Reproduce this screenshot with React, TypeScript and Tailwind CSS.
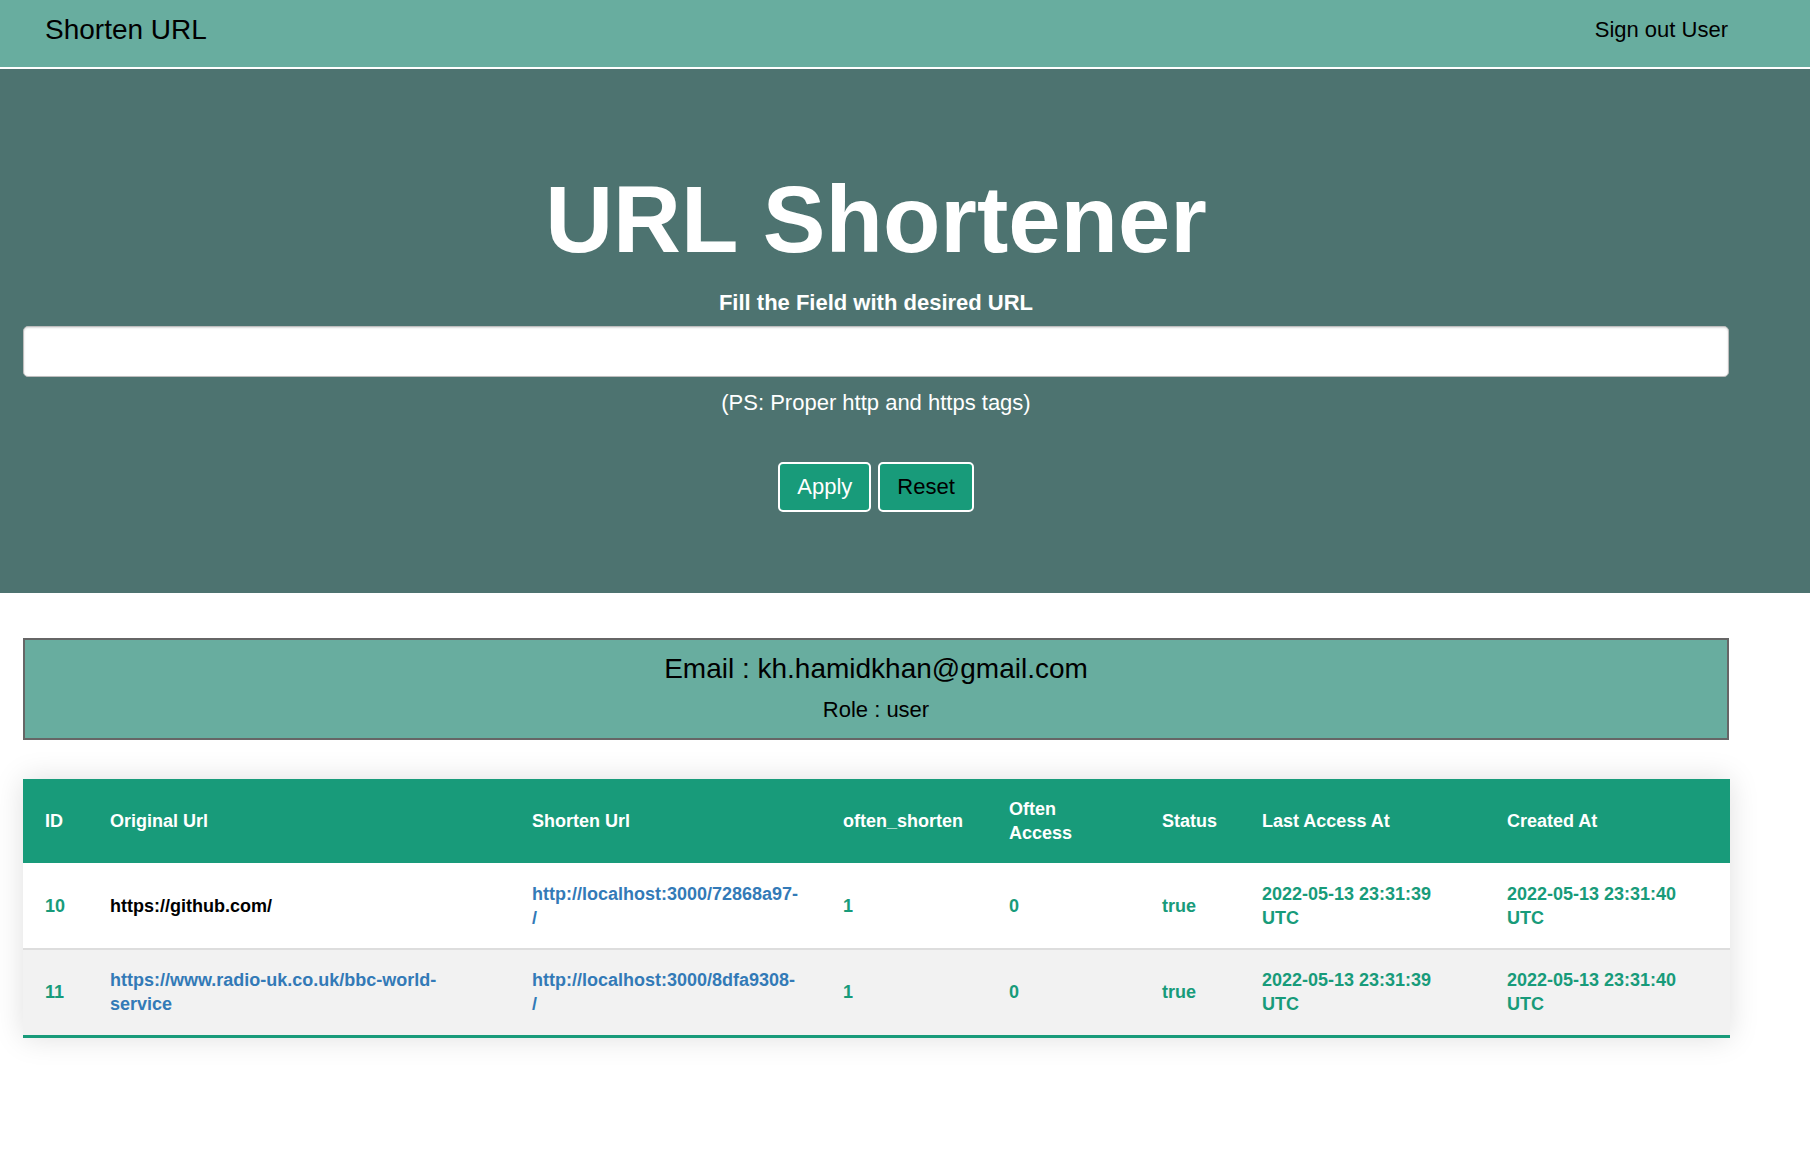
const rows = [
  {
    id: 10,
    original: 'https://github.com/',
    originalIsLink: false,
    short: 'http://localhost:3000/72868a97-/',
    oftenShorten: 1,
    oftenAccess: 0,
    status: 'true',
    lastAccess: '2022-05-13 23:31:39 UTC',
    created: '2022-05-13 23:31:40 UTC',
  },
  {
    id: 11,
    original: 'https://www.radio-uk.co.uk/bbc-world-service',
    originalIsLink: true,
    short: 'http://localhost:3000/8dfa9308-/',
    oftenShorten: 1,
    oftenAccess: 0,
    status: 'true',
    lastAccess: '2022-05-13 23:31:39 UTC',
    created: '2022-05-13 23:31:40 UTC',
  },
];

const headers = ['ID', 'Original Url', 'Shorten Url', 'often_shorten', 'Often Access', 'Status', 'Last Access At', 'Created At'];

const App = () => {
  return (
    <div className="min-h-screen bg-white font-['Liberation_Sans',Arial,sans-serif]">
      {/* Navbar */}
      <nav className="h-[69px] bg-[#68ad9f] border-b-2 border-white flex items-center justify-between pl-[45px] pr-[82px] pb-[7px]">
        <span className="text-[28px] leading-none text-black">Shorten URL</span>
        <a href="#" className="text-[22px] leading-none text-black">Sign out User</a>
      </nav>

      {/* Hero */}
      <section className="bg-[#4d7370] pt-[104px] pb-[81px]">
        <div className="ml-[23px] w-[1706px] flex flex-col items-center">
          <h1 className="text-[94px] leading-none font-bold text-white">URL Shortener</h1>
          <label className="mt-[25px] text-[22px] leading-none font-bold text-white">
            Fill the Field with desired URL
          </label>
          <input
            type="text"
            className="mt-[12px] w-full h-[51px] bg-white border border-[#bdbdbd] rounded-[5px] shadow-[inset_0_1px_2px_rgba(0,0,0,0.15)] px-3 text-[20px] outline-none"
          />
          <p className="mt-[15px] text-[22px] leading-none text-white">(PS: Proper http and https tags)</p>
          <div className="mt-[48px] flex gap-[7px]">
            <button className="h-[50px] px-[17px] bg-[#189b7a] border-2 border-white rounded-[5px] text-[22px] leading-none text-white">
              Apply
            </button>
            <button className="h-[50px] px-[17px] bg-[#189b7a] border-2 border-white rounded-[5px] text-[22px] leading-none text-black">
              Reset
            </button>
          </div>
        </div>
      </section>

      {/* User info */}
      <div className="ml-[23px] w-[1706px] mt-[45px] bg-[#68ad9f] border-2 border-[#666666] pt-[15px] pb-[17px] flex flex-col items-center">
        <p className="text-[28px] leading-none text-black">Email : kh.hamidkhan@gmail.com</p>
        <p className="mt-[16px] text-[22px] leading-none text-black">Role : user</p>
      </div>

      {/* Table */}
      <div className="ml-[23px] w-[1707px] mt-[39px] shadow-[0_0_28px_rgba(0,0,0,0.13)]">
        <table className="w-full table-fixed border-collapse text-[18px] leading-[24px] font-bold">
          <colgroup>
            <col className="w-[65px]" />
            <col className="w-[422px]" />
            <col className="w-[311px]" />
            <col className="w-[166px]" />
            <col className="w-[153px]" />
            <col className="w-[100px]" />
            <col className="w-[245px]" />
            <col className="w-[245px]" />
          </colgroup>
          <thead>
            <tr className="h-[84px] bg-[#189b7a] text-white text-left">
              {headers.map((h) => (
                <th key={h} className="pl-[22px] pr-[20px] align-middle font-bold">
                  {h}
                </th>
              ))}
            </tr>
          </thead>
          <tbody>
            {rows.map((r, i) => (
              <tr
                key={r.id}
                className={
                  i === 0
                    ? 'h-[86px] bg-white border-b-2 border-[#dddddd]'
                    : 'h-[87px] bg-[#f2f2f2] border-b-[3px] border-[#189b7a]'
                }
              >
                <td className="pl-[22px] pr-[20px] align-middle text-[#189b7a]">{r.id}</td>
                <td className="pl-[22px] pr-[20px] align-middle break-words">
                  {r.originalIsLink ? (
                    <a href="#" className="text-[#337ab7]">{r.original}</a>
                  ) : (
                    <span className="text-black">{r.original}</span>
                  )}
                </td>
                <td className="pl-[22px] pr-[20px] align-middle">
                  <a href="#" className="text-[#337ab7]">
                    {r.short.slice(0, -1)}
                    <br />
                    {r.short.slice(-1)}
                  </a>
                </td>
                <td className="pl-[22px] pr-[20px] align-middle text-[#189b7a]">{r.oftenShorten}</td>
                <td className="pl-[22px] pr-[20px] align-middle text-[#189b7a]">{r.oftenAccess}</td>
                <td className="pl-[22px] pr-[20px] align-middle text-[#189b7a]">{r.status}</td>
                <td className="pl-[22px] pr-[20px] align-middle text-[#189b7a]">{r.lastAccess}</td>
                <td className="pl-[22px] pr-[20px] align-middle text-[#189b7a]">{r.created}</td>
              </tr>
            ))}
          </tbody>
        </table>
      </div>
    </div>
  );
};

export default App;
